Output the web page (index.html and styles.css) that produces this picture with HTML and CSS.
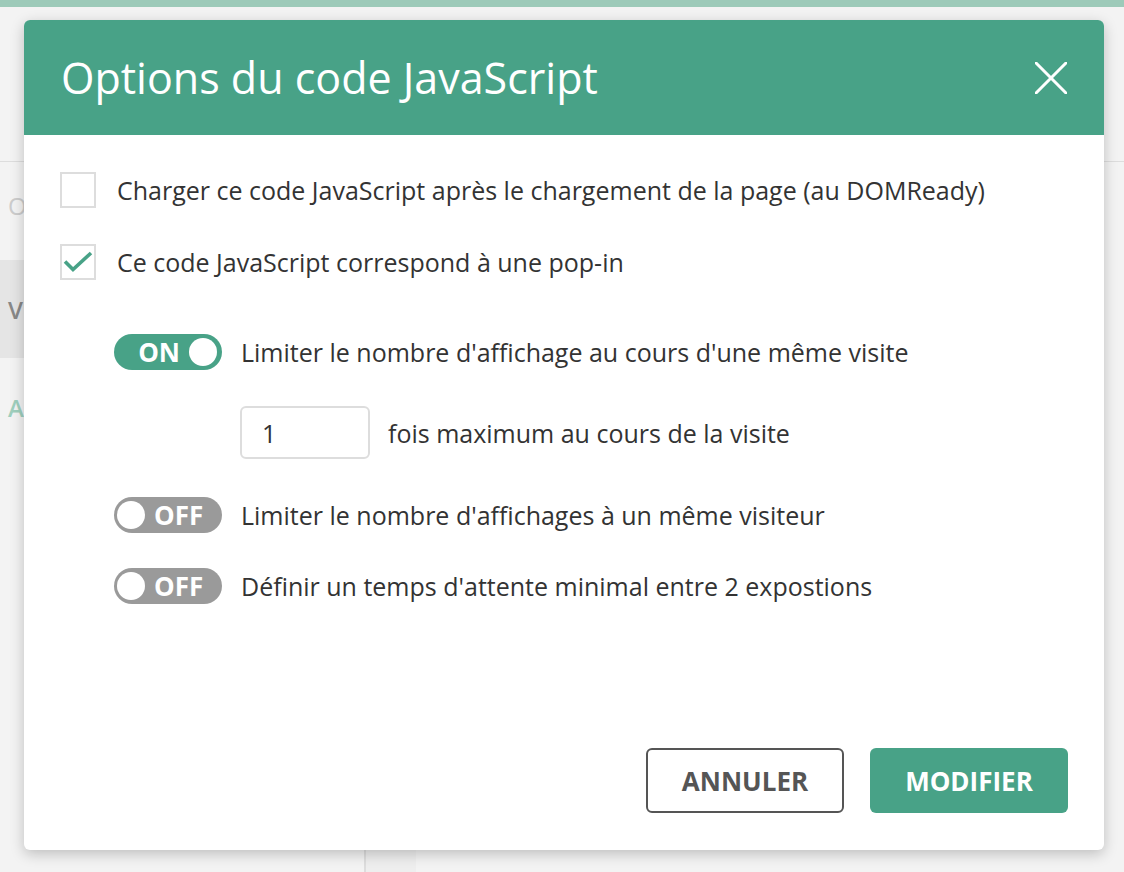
FILE: index.html
```html
<!DOCTYPE html>
<html lang="fr">
<head>
    <meta charset="UTF-8">
    <meta name="viewport" content="width=device-width, initial-scale=1.0">
    <title>Options du code JavaScript</title>
    <link rel="stylesheet" href="styles.css">
</head>
<body>
    <div class="topbar"></div>
    <div class="page-head"></div>
    <div class="page-main">
        <div class="sidebar">
            <div class="side-item faded">O</div>
            <div class="side-item active">V</div>
            <div class="side-item link">A</div>
        </div>
        <div class="page-gutter"></div>
        <div class="page-content"></div>
    </div>

    <div class="modal">
        <div class="modal-header">
            <h1 class="modal-title">Options du code JavaScript</h1>
            <svg class="close" width="32" height="32" viewBox="0 0 32 32">
                <path d="M1 1 L31 31 M31 1 L1 31" stroke="#fff" stroke-width="3" stroke-linecap="square" fill="none"/>
            </svg>
        </div>
        <div class="modal-body">
            <div class="check-row first">
                <span class="checkbox"></span>
                <span class="label">Charger ce code JavaScript après le chargement de la page (au DOMReady)</span>
            </div>
            <div class="check-row">
                <span class="checkbox">
                    <svg width="36" height="36" viewBox="0 0 36 36">
                        <path d="M5 17.5 L13 25.5 L31 9" stroke="#48a287" stroke-width="3.6" fill="none"/>
                    </svg>
                </span>
                <span class="label">Ce code JavaScript correspond à une pop-in</span>
            </div>

            <div class="toggle-row first">
                <span class="toggle on"><span class="toggle-text">ON</span><span class="knob"></span></span>
                <span class="label">Limiter le nombre d'affichage au cours d'une même visite</span>
            </div>
            <div class="input-row">
                <input class="count" type="text" value="1">
                <span class="label">fois maximum au cours de la visite</span>
            </div>
            <div class="toggle-row gap-a">
                <span class="toggle off"><span class="knob"></span><span class="toggle-text">OFF</span></span>
                <span class="label">Limiter le nombre d'affichages à un même visiteur</span>
            </div>
            <div class="toggle-row gap-b">
                <span class="toggle off"><span class="knob"></span><span class="toggle-text">OFF</span></span>
                <span class="label">Définir un temps d'attente minimal entre 2 expostions</span>
            </div>

            <div class="modal-footer">
                <button class="btn btn-cancel">Annuler</button>
                <button class="btn btn-submit">Modifier</button>
            </div>
        </div>
    </div>
</body>
</html>
```

FILE: styles.css
```css
body {
    margin: 0;
    background: #f3f3f3;
    font-family: "Open Sans", sans-serif;
    color: #333;
    height: 872px;
    overflow: hidden;
}
.topbar {
    height: 7px;
    background: #9dcab9;
}
.page-head {
    height: 154px;
    border-bottom: 1px solid #ddd;
}
.page-main {
    display: flex;
    height: 710px;
}
.sidebar {
    width: 364px;
    border-right: 2px solid #ddd;
}
.side-item {
    height: 98px;
    display: flex;
    align-items: center;
    padding-left: 8px;
    font-size: 24px;
    font-weight: 600;
}
.side-item.faded {
    color: #ccc;
    font-weight: 400;
    height: 86px;
    padding-bottom: 12px;
}
.side-item.active {
    background: #e5e5e5;
    color: #888;
}
.side-item.link {
    color: #9fcfbd;
}
.page-gutter {
    width: 50px;
    background: #eeeeee;
}
.page-content {
    flex: 1;
}

.modal {
    position: absolute;
    left: 24px;
    top: 20px;
    width: 1080px;
    height: 830px;
    background: #fff;
    border-radius: 6px;
    box-shadow: 0 4px 14px rgba(0, 0, 0, 0.22);
    display: flex;
    flex-direction: column;
    overflow: hidden;
}
.modal-header {
    height: 115px;
    background: #48a287;
    display: flex;
    align-items: center;
    justify-content: space-between;
    padding: 0 37px;
}
.modal-title {
    margin: 0;
    color: #fff;
    font-size: 43px;
    font-weight: 400;
}
.close {
    display: block;
}
.modal-body {
    flex: 1;
    display: flex;
    flex-direction: column;
    padding: 0 36px 37px 36px;
}
.label {
    font-size: 25px;
    color: #333;
}
.check-row {
    display: flex;
    align-items: center;
    height: 36px;
    margin-top: 36px;
}
.check-row.first {
    margin-top: 37px;
}
.checkbox {
    width: 32px;
    height: 32px;
    border: 2px solid #ddd;
    margin-right: 21px;
    position: relative;
    flex-shrink: 0;
}
.checkbox svg {
    position: absolute;
    left: -2px;
    top: -2px;
}
.toggle-row {
    display: flex;
    align-items: center;
    height: 36px;
    padding-left: 54px;
}
.toggle-row.first {
    margin-top: 54px;
}
.toggle-row.gap-a {
    margin-top: 38px;
}
.toggle-row.gap-b {
    margin-top: 35px;
}
.toggle {
    width: 108px;
    height: 36px;
    border-radius: 18px;
    display: flex;
    align-items: center;
    box-sizing: border-box;
    margin-right: 19px;
    color: #fff;
    font-weight: 700;
    font-size: 26px;
    flex-shrink: 0;
}
.toggle.on {
    background: #48a287;
    justify-content: flex-end;
    padding-right: 5px;
}
.toggle.off {
    background: #9a9a9a;
    padding-left: 3px;
}
.knob {
    width: 28px;
    height: 28px;
    border-radius: 50%;
    background: #fff;
}
.toggle.on .toggle-text {
    margin-right: 9px;
}
.toggle.off .toggle-text {
    margin-left: 9px;
}
.input-row {
    display: flex;
    align-items: center;
    margin-top: 36px;
    padding-left: 180px;
}
.count {
    width: 130px;
    height: 53px;
    box-sizing: border-box;
    border: 2px solid #ddd;
    border-radius: 6px;
    padding: 0 20px;
    font-family: "Open Sans", sans-serif;
    font-size: 25px;
    color: #333;
    margin-right: 18px;
}
.modal-footer {
    margin-top: auto;
    display: flex;
    justify-content: flex-end;
    gap: 26px;
}
.btn {
    width: 198px;
    height: 65px;
    border-radius: 6px;
    font-family: "Open Sans", sans-serif;
    font-size: 26px;
    font-weight: 700;
    text-transform: uppercase;
    cursor: pointer;
    padding: 0;
}
.btn-cancel {
    background: #fff;
    border: 2px solid #555;
    color: #555;
}
.btn-submit {
    background: #48a287;
    border: none;
    color: #fff;
}
```
